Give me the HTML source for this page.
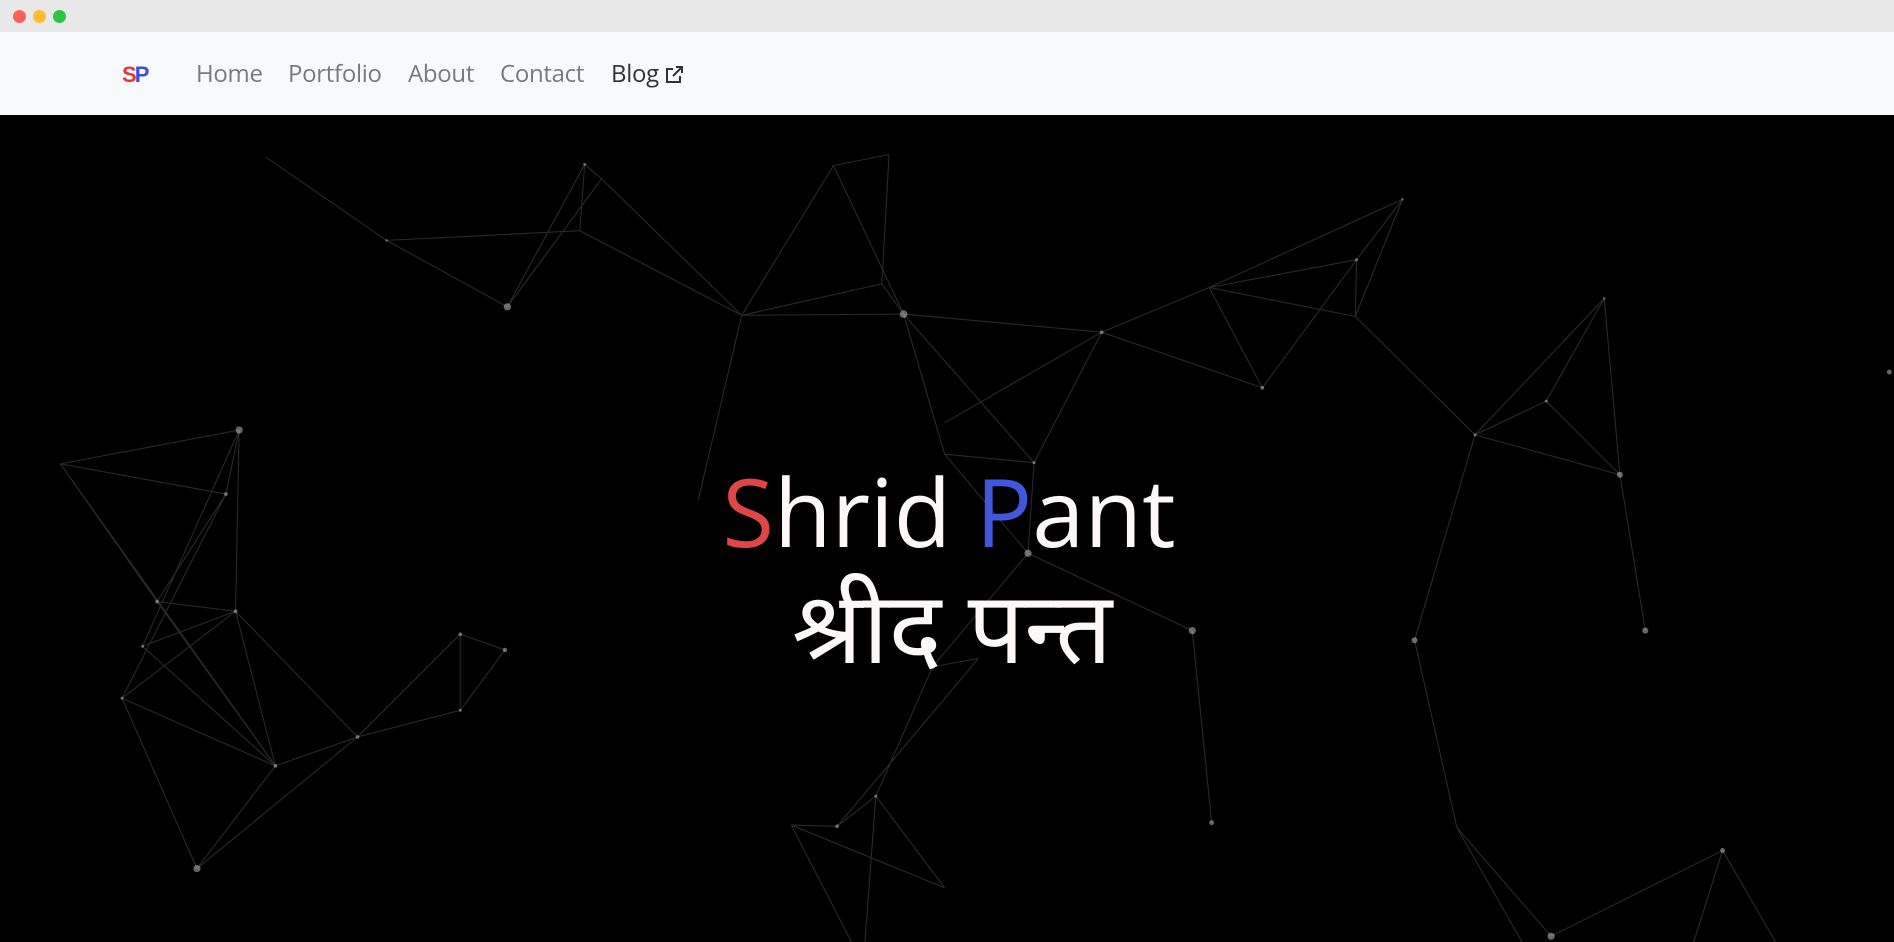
<!DOCTYPE html>
<html><head><meta charset="utf-8"><style>
html,body{margin:0;padding:0;width:1894px;height:942px;overflow:hidden;background:#000;font-family:"Open Sans","Liberation Sans","Noto Sans CJK SC",sans-serif}
.tb{position:absolute;left:0;top:0;width:1894px;height:32px;background:#e8e8e8}
.dot{position:absolute;top:10px;width:13px;height:13px;border-radius:50%}
.nav{position:absolute;left:0;top:32px;width:1894px;height:83px;background:#f8f9fa}
.nav a{position:absolute;top:25px;font-size:24px;color:#7a7a7a;text-decoration:none;letter-spacing:-0.3px}
.hero{position:absolute;left:0;top:115px;width:1894px;height:827px;background:#000}
svg.net{position:absolute;left:0;top:0}
.t1{position:absolute;left:0;width:1894px;top:456px;text-align:center;font-size:94px;color:#fbf8f7;line-height:110px;padding-left:4px;box-sizing:border-box}
.t2{position:absolute;left:0;width:1894px;top:584px;text-align:center;font-size:100px;color:#fbf8f7;line-height:110px;padding-left:10px;box-sizing:border-box;font-family:"Noto Sans Devanagari","Lohit Devanagari","FreeSans",sans-serif}
</style></head><body>
<div class="tb"><div class="dot" style="left:13px;background:#fe5f57"></div><div class="dot" style="left:33px;background:#febc2e"></div><div class="dot" style="left:53px;background:#28c840"></div></div>
<div class="nav">
<div style="position:absolute;left:122px;top:30px;font-weight:bold;font-size:22px;letter-spacing:-2px;font-family:'Liberation Sans',sans-serif"><span style="color:#e0393e">S</span><span style="color:#3e4fd6">P</span></div>
<a style="left:196px">Home</a><a style="left:288px">Portfolio</a><a style="left:408px">About</a><a style="left:500px">Contact</a><a style="left:611px;color:#333">Blog</a>
<svg style="position:absolute;left:664px;top:34px" width="20" height="18" viewBox="0 0 20 18" fill="none" stroke="#333" stroke-width="2"><path d="M9 3H3v13h13v-6"/><path d="M9 10l9-9M12 1h6v6"/></svg>
</div>
<div class="hero"></div>
<svg class="net" width="1894" height="942"><defs><clipPath id="c"><rect x="0" y="95" width="1568" height="700"/></clipPath></defs>
<g transform="scale(1.208)" clip-path="url(#c)" stroke="rgba(255,255,255,0.16)" stroke-width="0.9" fill="none" id="L">
<path d="M220 130L320 199M320 199L420 254M320 199L480 191M420 254L484 136M420 254L498 148M484 136L498 148M484 136L480 191M480 191L614 261M498 148L614 261M614 261L690 137M690 137L736 128M736 128L730 235M690 137L748 260M614 261L730 235M614 261L748 260M730 235L748 260M614 261L578 414M748 260L912 275M748 260L782 376M748 260L856 383M782 376L856 383M856 383L912 275M912 275L1001 238M912 275L1045 321M1001 238L1123 215M1001 238L1045 321M1045 321L1123 215M1001 238L1122 262M1122 262L1123 215M1123 215L1161 165M1001 238L1161 165M1122 262L1161 165M1122 262L1221 360M1221 360L1328 247M1221 360L1280 332M1280 332L1328 247M1280 332L1341 393M1221 360L1341 393M1328 247L1341 393M1341 393L1362 522M1221 360L1171 530M1171 530L1206 685M1206 685L1284 775M1284 775L1426 704M1426 704L1470 780M1426 704L1402 780M1206 685L1260 780M856 383L851 458M782 376L851 458M851 458L987 522M987 522L1003 681M851 458L772 552M772 552L810 545M772 552L725 659M725 659L693 684M693 684L655 683M725 659L782 735M655 683L782 735M655 683L705 780M725 659L716 780M912 275L782 350M810 545L693 684M50 384L198 356M50 384L187 409M198 356L187 409M198 356L195 506M187 409L130 498M187 409L101 578M198 356L118 535M130 498L195 506M118 535L195 506M101 578L195 506M50 384L130 498M50 384L228 634M130 498L228 634M118 535L228 634M101 578L228 634M195 506L228 634M195 506L296 610M228 634L296 610M101 578L163 719M163 719L228 634M163 719L296 610M296 610L381 525M296 610L381 588M381 525L418 538M381 525L381 588M381 588L418 538"/>
</g>
<g transform="scale(1.208)" fill="rgba(255,255,255,0.4)">
<circle cx="198" cy="356" r="3"/><circle cx="187" cy="409" r="1.5"/><circle cx="130" cy="498" r="1.5"/><circle cx="195" cy="506" r="1.5"/><circle cx="118" cy="535" r="1.2"/><circle cx="101" cy="578" r="1.2"/><circle cx="228" cy="634" r="1.5"/><circle cx="296" cy="610" r="1.5"/><circle cx="163" cy="719" r="3"/><circle cx="381" cy="525" r="1.5"/><circle cx="418" cy="538" r="1.8"/><circle cx="381" cy="588" r="1.2"/><circle cx="420" cy="254" r="3"/><circle cx="484" cy="136" r="1.2"/><circle cx="320" cy="199" r="1"/><circle cx="748" cy="260" r="3.2"/><circle cx="912" cy="275" r="1.5"/><circle cx="856" cy="383" r="1.2"/><circle cx="851" cy="458" r="3"/><circle cx="987" cy="522" r="3"/><circle cx="772" cy="552" r="2"/><circle cx="1003" cy="681" r="2"/><circle cx="725" cy="659" r="1.2"/><circle cx="693" cy="684" r="1.5"/><circle cx="1045" cy="321" r="1.5"/><circle cx="1123" cy="215" r="1.2"/><circle cx="1161" cy="165" r="1"/><circle cx="1221" cy="360" r="1.2"/><circle cx="1280" cy="332" r="1.2"/><circle cx="1341" cy="393" r="2.5"/><circle cx="1362" cy="522" r="2.5"/><circle cx="1171" cy="530" r="2.5"/><circle cx="1284" cy="775" r="3"/><circle cx="1426" cy="704" r="2"/><circle cx="1564" cy="308" r="2"/><circle cx="1328" cy="247" r="1"/>
</g></svg>
<div class="t1"><span style="color:#e04646">S</span>hrid <span style="color:#4157dd">P</span>ant</div>
<div class="t2">श्रीद पन्त</div>
</body></html>
